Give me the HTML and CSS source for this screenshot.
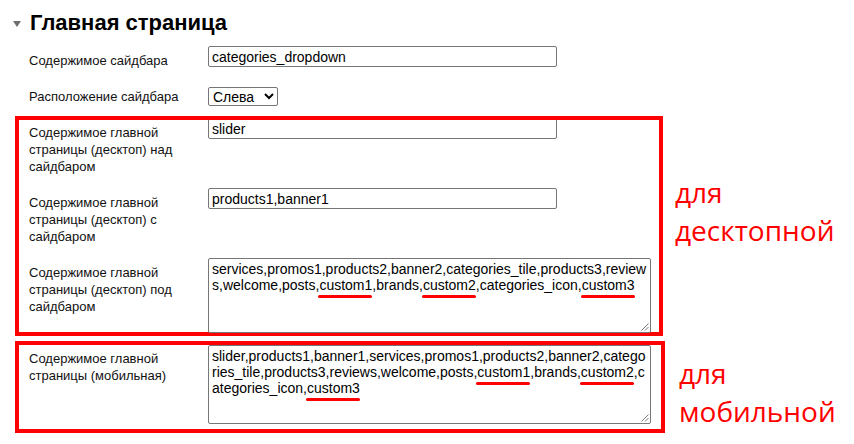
FILE: index.html
```html
<!DOCTYPE html>
<html lang="ru">
<head>
<meta charset="utf-8">
<title>Главная страница</title>
<link rel="stylesheet" href="styles.css">
</head>
<body>
<div class="page">
  <h2 class="section-title"><svg class="caret" viewBox="0 0 8 6"><polygon points="0,0 8,0 4,6" fill="#6f6f6f"/></svg>Главная страница</h2>
  <div class="form">
    <div class="row row-sidebar">
      <div class="label">Содержимое сайдбара</div>
      <div class="field"><input class="text-input" type="text" value="categories_dropdown"></div>
    </div>
    <div class="row row-select">
      <div class="label">Расположение сайдбара</div>
      <div class="field"><select class="select"><option>Слева</option><option>Справа</option></select></div>
    </div>
    <div class="annotated">
      <div class="group group-desktop">
        <div class="row row-tall">
          <div class="label">Содержимое главной страницы (десктоп) над сайдбаром</div>
          <div class="field"><input class="text-input" type="text" value="slider"></div>
        </div>
        <div class="row row-tall">
          <div class="label">Содержимое главной страницы (десктоп) с сайдбаром</div>
          <div class="field"><input class="text-input" type="text" value="products1,banner1"></div>
        </div>
        <div class="row">
          <div class="label">Содержимое главной страницы (десктоп) под сайдбаром</div>
          <div class="field"><div class="textbox">services,promos1,products2,banner2,categories_tile,products3,reviews,welcome,posts,<span class="mark">custom1</span>,brands,<span class="mark">custom2</span>,categories_icon,<span class="mark">custom3</span><svg class="grip" viewBox="0 0 9 9"><line x1="8.5" y1="1.5" x2="1.5" y2="8.5" stroke="#777" stroke-width="1"/><line x1="8.5" y1="5" x2="5" y2="8.5" stroke="#777" stroke-width="1"/></svg></div></div>
        </div>
      </div>
      <div class="note note-desktop">для<br>десктопной</div>
    </div>
    <div class="annotated annotated-mobile">
      <div class="group group-mobile">
        <div class="row row-mobile">
          <div class="label">Содержимое главной страницы (мобильная)</div>
          <div class="field"><div class="textbox textbox-tall">slider,products1,banner1,services,promos1,products2,banner2,categories_tile,products3,reviews,welcome,posts,<span class="mark">custom1</span>,brands,<span class="mark">custom2</span>,categories_icon,<span class="mark">custom3</span><svg class="grip" viewBox="0 0 9 9"><line x1="8.5" y1="1.5" x2="1.5" y2="8.5" stroke="#777" stroke-width="1"/><line x1="8.5" y1="5" x2="5" y2="8.5" stroke="#777" stroke-width="1"/></svg></div></div>
        </div>
      </div>
      <div class="note note-mobile">для<br>мобильной</div>
    </div>
  </div>
</div>
</body>
</html>
```
FILE: styles.css
```css
* { box-sizing: border-box; }
html, body { margin: 0; padding: 0; background: #fff; }
body {
  font-family: "Liberation Sans", Arial, sans-serif;
  color: #000;
  width: 854px;
  height: 444px;
  overflow: hidden;
}
.page { padding-top: 10px; }
.section-title {
  display: flex;
  align-items: center;
  margin: 0 0 11px 13px;
  font-size: 22px;
  line-height: 25px;
  font-weight: bold;
  color: #000;
}
.caret {
  width: 8px;
  height: 6px;
  margin: 2px 9px 0 0;
  flex: none;
}
.form { margin-left: 17px; }
.row {
  display: grid;
  grid-template-columns: 179px 1fr;
  align-items: start;
  padding-left: 12px;
  width: 644px;
}
.label {
  font-size: 13px;
  line-height: 17px;
  padding: 6px 10px 0 0;
  color: #111;
}
.row-sidebar { margin-bottom: 18px; }
.row-select { margin-bottom: 12px; }
.row-select .label { padding-top: 1px; }
.row-tall { margin-bottom: 13px; }
.row-mobile .label { padding-top: 5px; }

.text-input {
  display: block;
  width: 349px;
  height: 21px;
  margin: 0;
  border: 1px solid #767676;
  border-radius: 2px;
  padding: 1px 3px;
  font: 14px "Liberation Sans", Arial, sans-serif;
  color: #000;
  background: #fff;
}
.select {
  display: block;
  width: 70px;
  height: 19px;
  margin: 0;
  font: 14px "Liberation Sans", Arial, sans-serif;
  color: #000;
  border: 1px solid #767676;
  border-radius: 2px;
  background: #fff;
}
.textbox {
  position: relative;
  width: 443px;
  height: 75px;
  border: 1px solid #767676;
  border-radius: 2px;
  padding: 2px 3px;
  font-size: 14px;
  line-height: 16px;
  word-break: break-all;
  color: #000;
  background: #fff;
}
.textbox-tall { height: 79px; }
.mark { position: relative; }
.mark::after {
  content: "";
  position: absolute;
  left: -1px;
  right: 0;
  top: calc(100% + 2px);
  height: 3px;
  background: #ff0000;
  border-radius: 2px;
}
.grip {
  position: absolute;
  right: 1px;
  bottom: 1px;
  width: 9px;
  height: 9px;
}

.annotated {
  display: flex;
  align-items: flex-start;
}
.annotated-mobile { margin-top: 9px; }
.group {
  outline: 4px solid #ff0000;
  outline-offset: -2px;
  width: 644px;
  flex: none;
}
.group-desktop { padding-bottom: 1px; }
.group-mobile { width: 646px; padding: 2px 0 7px; }

.note {
  font-family: "Open Sans", "Noto Sans", sans-serif;
  font-size: 28px;
  line-height: 38px;
  color: #ff0000;
  white-space: nowrap;
}
.note-desktop { margin: 55px 0 0 14px; }
.note-mobile { margin: 11px 0 0 16px; }
```
